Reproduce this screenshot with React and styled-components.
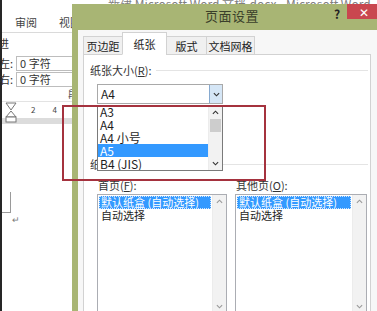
import styled, { createGlobalStyle } from 'styled-components';

const GlobalStyle = createGlobalStyle`
  html, body {
    margin: 0;
    padding: 0;
    background: #ffffff;
    overflow: hidden;
  }
  body {
    font-family: "Noto Sans CJK SC", "Liberation Sans", sans-serif;
    color: #1e1e1e;
  }
`;

const Screen = styled.div`
  position: relative;
  width: 377px;
  height: 311px;
  overflow: hidden;
  background: #ffffff;
`;

/* ---------- Word window behind the dialog ---------- */

const WordWindow = styled.div`
  display: flex;
  flex-direction: column;
  height: 100%;
  border-left: 2px solid #262626;
  box-sizing: border-box;
`;

const WordTitle = styled.div`
  height: 12px;
  padding-left: 106px;
  font-size: 12px;
  line-height: 8px;
  color: #808080;
  white-space: nowrap;
  overflow: hidden;
`;

const RibbonTabs = styled.div`
  display: flex;
  gap: 22px;
  height: 20px;
  padding-left: 13px;
  align-items: center;
  font-size: 11px;
  color: #444;
  border-bottom: 1px solid #dadada;
`;

const RibbonBody = styled.div`
  display: flex;
  flex-direction: column;
  height: 68px;
  padding-top: 4px;
  box-sizing: border-box;
  font-size: 11px;
  color: #333;
`;

const GroupHint = styled.div`
  height: 18px;
  margin-left: -4px;
  line-height: 12px;
`;

const IndentRow = styled.div`
  display: flex;
  align-items: center;
  gap: 3px;
  height: 16px;
  margin-left: -3px;
`;

const IndentInput = styled.div`
  width: 60px;
  height: 13px;
  padding-left: 3px;
  border: 1px solid #bdbdbd;
  background: #fff;
  line-height: 13px;
`;

const GroupLabel = styled.div`
  padding-left: 66px;
  font-size: 10px;
  color: #555;
  line-height: 14px;
`;

const Ruler = styled.div`
  display: flex;
  align-items: flex-start;
  height: 22px;
  border-top: 1px solid #e3e3e3;
  background: linear-gradient(#ffffff 0 16px, #dcdcdc 16px 100%);
  font-size: 8px;
  color: #444;
`;

const RulerMark = styled.svg`
  flex: none;
  margin: 0 0 0 3px;
`;

const RulerNum = styled.span`
  margin-left: ${(p) => p.gap}px;
  line-height: 16px;
`;

const PageArea = styled.div`
  flex: 1;
  background: #ffffff;
`;

const PageCorner = styled.div`
  width: 8px;
  height: 20px;
  margin-top: 68px;
  border-right: 1px solid #9a9a9a;
  border-bottom: 1px solid #9a9a9a;
`;

const ParaMark = styled.div`
  padding-left: 10px;
  font-size: 9px;
  color: #7a7a7a;
  line-height: 14px;
`;

/* ---------- Page setup dialog ---------- */

const Dialog = styled.div`
  position: absolute;
  left: 72px;
  top: 4px;
  width: 320px;
  height: 330px;
  display: flex;
  flex-direction: column;
  background: #a8b574;
  padding: 0 0 0 6px;
  box-sizing: border-box;
`;

const TitleBar = styled.div`
  display: flex;
  align-items: flex-start;
  height: 26px;
  flex: none;
`;

const DialogTitle = styled.div`
  margin: 5px 0 0 127px;
  font-size: 13px;
  line-height: 14px;
  color: #3a3f2a;
  letter-spacing: 0.5px;
`;

const HelpMark = styled.div`
  margin: 3px 0 0 75px;
  font-size: 12px;
  font-weight: bold;
  line-height: 14px;
  color: #222;
`;

const CloseButton = styled.div`
  width: 34px;
  height: 15px;
  margin-left: 7px;
  background: #c9474f;
  color: #fff;
  display: flex;
  align-items: center;
  justify-content: center;
  font-size: 12px;
  line-height: 1;
`;

const DialogBody = styled.div`
  flex: 1;
  background: #f7f7f7;
  padding: 3px 0 0 5px;
  display: flex;
  flex-direction: column;
`;

const TabRow = styled.div`
  display: flex;
  align-items: flex-end;
  height: 22px;
  position: relative;
  z-index: 1;
  margin-bottom: -1px;
`;

const Tab = styled.div`
  width: ${(p) => p.w}px;
  height: ${(p) => (p.active ? 23 : 19)}px;
  box-sizing: border-box;
  margin-left: ${(p) => (p.first ? 0 : -1)}px;
  border: 1px solid #d2d2d2;
  border-bottom-color: ${(p) => (p.active ? '#ffffff' : '#d2d2d2')};
  background: ${(p) => (p.active ? '#ffffff' : '#f0f0f0')};
  font-size: 11px;
  color: #222;
  white-space: nowrap;
  display: flex;
  align-items: center;
  justify-content: center;
`;

const TabPanel = styled.div`
  flex: 1;
  width: 288px;
  box-sizing: border-box;
  border: 1px solid #d2d2d2;
  background: #ffffff;
  padding: 8px 0 0 6px;
  display: flex;
  flex-direction: column;
`;

const SectionHead = styled.div`
  display: flex;
  align-items: center;
  gap: 4px;
  height: 14px;
  font-size: 11px;
  color: #333;
  white-space: nowrap;
  margin-top: ${(p) => p.top || 0}px;

  &::after {
    content: '';
    flex: 1;
    height: 1px;
    background: #e4e4e4;
    margin-right: 2px;
  }
`;

const ComboWrap = styled.div`
  position: relative;
  width: 126px;
  margin: 7px 0 0 7px;
`;

const Combo = styled.div`
  display: flex;
  height: 20px;
  border: 1px solid #a9a9a9;
  background: #fff;
  box-sizing: border-box;
`;

const ComboText = styled.div`
  flex: 1;
  padding-left: 3px;
  font-size: 12px;
  line-height: 18px;
`;

const ComboButton = styled.div`
  width: 12px;
  background: #d5e6f6;
  border-left: 1px solid #86a9cf;
  display: flex;
  align-items: center;
  justify-content: center;
`;

const DropList = styled.div`
  position: absolute;
  left: 0;
  top: 21px;
  width: 126px;
  height: 66px;
  border: 1px solid #7a7a7a;
  background: #fff;
  box-sizing: border-box;
  display: flex;
  overflow: hidden;
  z-index: 3;
`;

const DropItems = styled.div`
  flex: 1;
  display: flex;
  flex-direction: column;
  margin-top: -1px;
`;

const DropItem = styled.div`
  height: 13px;
  padding-left: 2px;
  font-size: 12px;
  line-height: 13px;
  white-space: nowrap;
  background: ${(p) => (p.selected ? '#3399ff' : 'transparent')};
  color: ${(p) => (p.selected ? '#ffffff' : '#1e1e1e')};
`;

const ScrollBar = styled.div`
  width: 13px;
  flex: none;
  background: #f2f2f2;
  border-left: 1px solid #ececec;
  display: flex;
  flex-direction: column;
  align-items: stretch;
`;

const ScrollArrow = styled.div`
  height: 13px;
  display: flex;
  align-items: center;
  justify-content: center;
`;

const ScrollThumb = styled.div`
  height: ${(p) => p.h}px;
  background: #cdcdcd;
  margin: 0 1px;
`;

const ScrollSpacer = styled.div`
  flex: 1;
`;

const SourceColumns = styled.div`
  display: flex;
  gap: 8px;
  margin: 7px 0 0 7px;
`;

const SourceColumn = styled.div`
  display: flex;
  flex-direction: column;
  width: ${(p) => p.w}px;
`;

const FieldLabel = styled.div`
  height: 14px;
  font-size: 11px;
  line-height: 14px;
  color: #333;
  padding-left: 1px;
  white-space: nowrap;
`;

const ListBox = styled.div`
  display: flex;
  height: 120px;
  margin-top: 2px;
  border: 1px solid #abadb3;
  background: #fff;
  box-sizing: border-box;
`;

const ListItems = styled.div`
  flex: 1;
  display: flex;
  flex-direction: column;
  padding: 1px 1px 0 1px;
  min-width: 0;
`;

const ListItem = styled.div`
  height: 13px;
  padding-left: 2px;
  font-size: 11px;
  line-height: 13px;
  white-space: nowrap;
  overflow: hidden;
  background: ${(p) => (p.selected ? '#3399ff' : 'transparent')};
  color: ${(p) => (p.selected ? '#ffffff' : '#1e1e1e')};
  outline: ${(p) => (p.selected ? '1px dotted #cfe6ff' : 'none')};
  outline-offset: -1px;
`;

/* ---------- annotation ---------- */

const RedFrame = styled.div`
  position: absolute;
  left: 62px;
  top: 105px;
  width: 204px;
  height: 76px;
  box-sizing: border-box;
  border: 2px solid #a5323e;
  z-index: 5;
  pointer-events: none;
`;

const Chevron = ({ dir = 'down', size = 7, color = '#333' }) => (
  <svg width={size} height={size - 2} viewBox="0 0 8 5">
    <path
      d={dir === 'down' ? 'M1 1 L4 4 L7 1' : 'M1 4 L4 1 L7 4'}
      fill="none"
      stroke={color}
      strokeWidth="1.3"
    />
  </svg>
);

const paperSizes = ['A3', 'A4', 'A4 小号', 'A5', 'B4 (JIS)'];
const trays = ['默认纸盒 (自动选择)', '自动选择'];

function TrayList() {
  return (
    <ListBox>
      <ListItems>
        {trays.map((t, i) => (
          <ListItem key={t} selected={i === 0}>{t}</ListItem>
        ))}
      </ListItems>
      <ScrollBar>
        <ScrollArrow><Chevron dir="up" color="#9a9a9a" /></ScrollArrow>
        <ScrollSpacer />
        <ScrollArrow><Chevron dir="down" color="#9a9a9a" /></ScrollArrow>
      </ScrollBar>
    </ListBox>
  );
}

export default function App() {
  return (
    <Screen>
      <GlobalStyle />

      <WordWindow>
        <WordTitle>新建 Microsoft Word 文档.docx - Microsoft Word</WordTitle>
        <RibbonTabs>
          <span>审阅</span>
          <span>视图</span>
        </RibbonTabs>
        <RibbonBody>
          <GroupHint>进</GroupHint>
          <IndentRow>
            <span>左:</span>
            <IndentInput>0 字符</IndentInput>
          </IndentRow>
          <IndentRow>
            <span>右:</span>
            <IndentInput>0 字符</IndentInput>
          </IndentRow>
          <GroupLabel>段</GroupLabel>
        </RibbonBody>
        <Ruler>
          <RulerMark width="12" height="21" viewBox="0 0 12 21">
            <path d="M1 1 H11 L6 8 Z" fill="#fff" stroke="#777" />
            <path d="M6 9 L1 15 H11 Z" fill="#fff" stroke="#777" />
            <rect x="1" y="15" width="10" height="5" fill="#fff" stroke="#777" />
          </RulerMark>
          <RulerNum gap={14}>2</RulerNum>
          <RulerNum gap={17}>4</RulerNum>
        </Ruler>
        <PageArea>
          <PageCorner />
          <ParaMark>↵</ParaMark>
        </PageArea>
      </WordWindow>

      <Dialog>
        <TitleBar>
          <DialogTitle>页面设置</DialogTitle>
          <HelpMark>?</HelpMark>
          <CloseButton>✕</CloseButton>
        </TitleBar>
        <DialogBody>
          <TabRow>
            <Tab w={40} first>页边距</Tab>
            <Tab w={45} active>纸张</Tab>
            <Tab w={41}>版式</Tab>
            <Tab w={49}>文档网格</Tab>
          </TabRow>
          <TabPanel>
            <SectionHead><span>纸张大小(<u>R</u>):</span></SectionHead>
            <ComboWrap>
              <Combo>
                <ComboText>A4</ComboText>
                <ComboButton><Chevron /></ComboButton>
              </Combo>
              <DropList>
                <DropItems>
                  {paperSizes.map((s) => (
                    <DropItem key={s} selected={s === 'A5'}>{s}</DropItem>
                  ))}
                </DropItems>
                <ScrollBar>
                  <ScrollArrow><Chevron dir="up" /></ScrollArrow>
                  <ScrollThumb h={13} />
                  <ScrollSpacer />
                  <ScrollArrow><Chevron dir="down" /></ScrollArrow>
                </ScrollBar>
              </DropList>
            </ComboWrap>
            <SectionHead top={53}><span>纸张来源</span></SectionHead>
            <SourceColumns>
              <SourceColumn w={130}>
                <FieldLabel>首页(<u>F</u>):</FieldLabel>
                <TrayList />
              </SourceColumn>
              <SourceColumn w={132}>
                <FieldLabel>其他页(<u>O</u>):</FieldLabel>
                <TrayList />
              </SourceColumn>
            </SourceColumns>
          </TabPanel>
        </DialogBody>
      </Dialog>

      <RedFrame />
    </Screen>
  );
}
